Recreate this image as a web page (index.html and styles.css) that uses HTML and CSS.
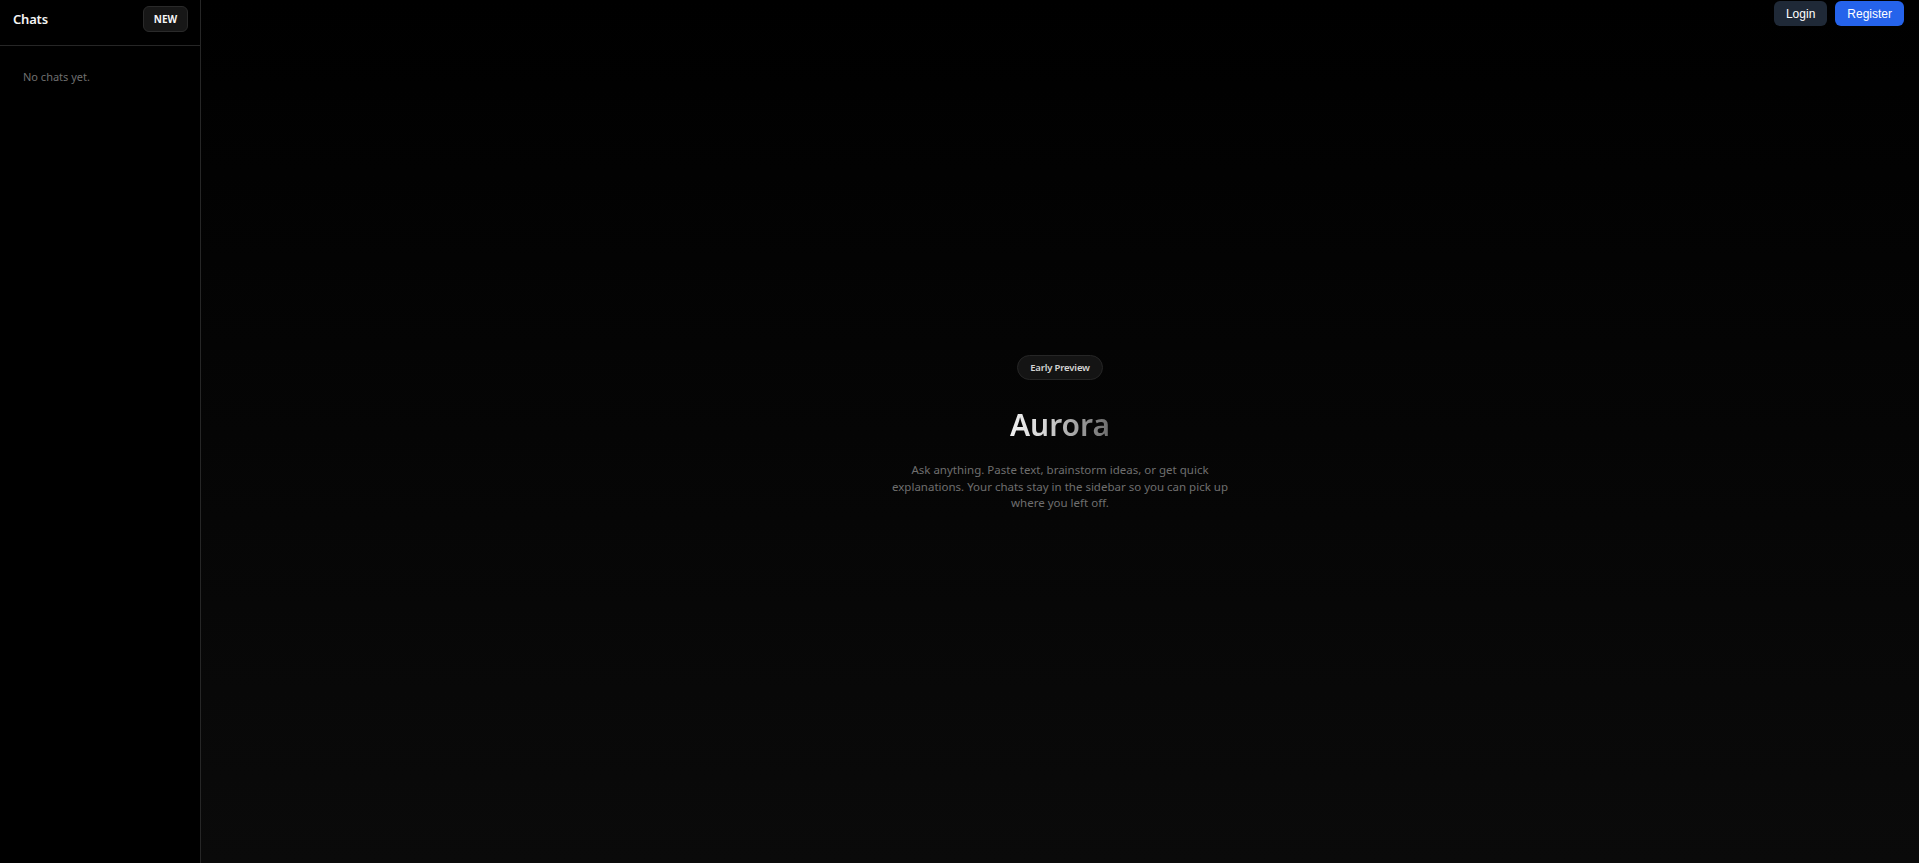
FILE: index.html
```html
<!DOCTYPE html>
<html lang="en">
<head>
<meta charset="utf-8">
<title>Aurora</title>
<link rel="stylesheet" href="styles.css">
</head>
<body>
<div class="app">
  <aside class="sidebar">
    <div class="sidebar-header">
      <span class="sidebar-title">Chats</span>
      <button class="new-btn">NEW</button>
    </div>
    <div class="chat-list">
      <p class="empty">No chats yet.</p>
    </div>
  </aside>
  <main class="main">
    <div class="auth">
      <button class="btn btn-login">Login</button>
      <button class="btn btn-register">Register</button>
    </div>
    <section class="hero">
      <span class="badge">Early Preview</span>
      <h1 class="title">Aurora</h1>
      <p class="lead">Ask anything. Paste text, brainstorm ideas, or get quick explanations. Your chats stay in the sidebar so you can pick up where you left off.</p>
    </section>
  </main>
</div>
</body>
</html>
```

FILE: styles.css
```css
* { box-sizing: border-box; }
html, body { margin: 0; height: 100%; background: #000; }
body { font-family: "Noto Sans", "Open Sans", sans-serif; color: #e5e5e5; }

.app { display: flex; height: 100vh; }

.sidebar {
  width: 201px;
  flex: none;
  background: #000;
  border-right: 1px solid #262626;
  display: flex;
  flex-direction: column;
}
.sidebar-header {
  height: 46px;
  border-bottom: 1px solid #262626;
  display: flex;
  align-items: flex-start;
  justify-content: space-between;
  padding: 6px 12px 0 13px;
}
.sidebar-title {
  font-size: 13px;
  line-height: 26px;
  font-weight: 600;
  letter-spacing: -0.2px;
  color: #f5f5f5;
}
.new-btn {
  width: 45px;
  height: 26px;
  border-radius: 6px;
  border: 1px solid #2a2a2a;
  background: #171717;
  color: #f5f5f5;
  font-family: "Noto Sans", sans-serif;
  font-size: 10px;
  font-weight: 700;
  padding: 0;
}
.chat-list { padding: 23px 23px; }
.empty { margin: 0; font-size: 11px; line-height: 16px; color: #6f6f6f; }

.main {
  flex: 1;
  position: relative;
  background: linear-gradient(to bottom, #000 0%, #0a0a0a 100%);
  display: flex;
  align-items: center;
  justify-content: center;
}
.auth {
  position: absolute;
  top: 1px;
  right: 15px;
  display: flex;
  gap: 8px;
}
.btn {
  height: 25px;
  padding: 0 12px;
  border: none;
  border-radius: 6px;
  font-family: "Liberation Sans", Arial, sans-serif;
  font-size: 12px;
  color: #fff;
}
.btn-login { background: #1f2937; }
.btn-register { background: #2563eb; }

.hero {
  display: flex;
  flex-direction: column;
  align-items: center;
  text-align: center;
  margin-top: 4px;
}
.badge {
  height: 25px;
  padding: 0 12px;
  display: inline-flex;
  align-items: center;
  border-radius: 999px;
  border: 1px solid #262626;
  background: #141414;
  font-size: 9.5px;
  letter-spacing: -0.15px;
  font-weight: 600;
  color: #d4d4d4;
}
.title {
  margin: 25px 0 0;
  font-size: 30px;
  line-height: 40px;
  font-weight: 600;
  background: linear-gradient(to right, #f0f0f0 0%, #d4d4d4 35%, #6b6b6b 100%);
  -webkit-background-clip: text;
  background-clip: text;
  color: transparent;
}
.lead {
  margin: 17px 0 0;
  max-width: 345px;
  font-size: 11.5px;
  line-height: 16.5px;
  color: #6f6f6f;
}
```
